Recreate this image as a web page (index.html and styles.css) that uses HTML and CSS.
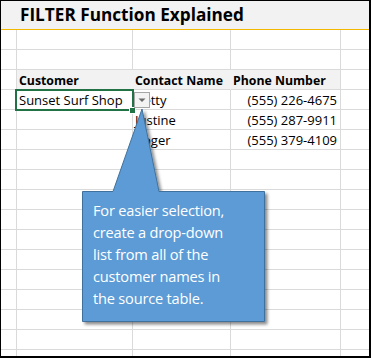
FILE: index.html
```html
<!DOCTYPE html>
<html>
<head>
<meta charset="utf-8">
<link rel="stylesheet" href="styles.css">
</head>
<body>
<div class="sheet">
  <div class="title">FILTER Function Explained</div>
  <div class="grid">
    <div class="c"></div><div class="c"></div><div class="c"></div><div class="c"></div><div class="c last"></div>
    <div class="c"></div><div class="c"></div><div class="c"></div><div class="c"></div><div class="c last"></div>
    <div class="c"></div><div class="c hd">Customer</div><div class="c hd">Contact Name</div><div class="c hd hd-end">Phone Number</div><div class="c last"></div>
    <div class="c"></div><div class="c">Sunset Surf Shop</div><div class="c">Betty</div><div class="c num">(555) 226-4675</div><div class="c last"></div>
    <div class="c"></div><div class="c"></div><div class="c">Justine</div><div class="c num">(555) 287-9911</div><div class="c last"></div>
    <div class="c"></div><div class="c"></div><div class="c">Roger</div><div class="c num">(555) 379-4109</div><div class="c last"></div>
    <div class="c"></div><div class="c"></div><div class="c"></div><div class="c"></div><div class="c last"></div>
    <div class="c"></div><div class="c"></div><div class="c"></div><div class="c"></div><div class="c last"></div>
    <div class="c"></div><div class="c"></div><div class="c"></div><div class="c"></div><div class="c last"></div>
    <div class="c"></div><div class="c"></div><div class="c"></div><div class="c"></div><div class="c last"></div>
    <div class="c"></div><div class="c"></div><div class="c"></div><div class="c"></div><div class="c last"></div>
    <div class="c"></div><div class="c"></div><div class="c"></div><div class="c"></div><div class="c last"></div>
    <div class="c"></div><div class="c"></div><div class="c"></div><div class="c"></div><div class="c last"></div>
    <div class="c"></div><div class="c"></div><div class="c"></div><div class="c"></div><div class="c last"></div>
    <div class="c"></div><div class="c"></div><div class="c"></div><div class="c"></div><div class="c last"></div>
    <div class="c"></div><div class="c"></div><div class="c"></div><div class="c"></div><div class="c last"></div>
    <div class="c"></div><div class="c"></div><div class="c"></div><div class="c"></div><div class="c last"></div>
  </div>

  <div class="selection"></div>
  <div class="handle"></div>
  <div class="dropdown">
    <svg width="14" height="14" viewBox="0 0 14 14"><path d="M3.5 5.5 L10.5 5.5 L7 9 Z" fill="#6b6b6b"/></svg>
  </div>

  <svg class="callout" width="371" height="358" viewBox="0 0 371 358">
    <defs>
      <filter id="sh" x="-20%" y="-20%" width="140%" height="140%">
        <feDropShadow dx="2.5" dy="2.5" stdDeviation="1.8" flood-color="#000" flood-opacity="0.45"/>
      </filter>
    </defs>
    <path d="M82.5 191.5 L113 191.5 L142 109 L159 191.5 L264.5 191.5 L264.5 321.5 L82.5 321.5 Z" fill="#5b9bd5" stroke="#41719c" stroke-width="1" filter="url(#sh)"/>
  </svg>
  <div class="callout-text">For easier selection,<br>create a drop-down<br>list from all of the<br>customer names in<br>the source table.</div>
</div>
</body>
</html>
```

FILE: styles.css
```css
html, body {
  margin: 0;
  padding: 0;
  background: #ffffff;
}

.sheet {
  position: relative;
  width: 371px;
  height: 358px;
  box-sizing: border-box;
  border: 1px solid #000;
  border-right-width: 2px;
  border-bottom-width: 2px;
  overflow: hidden;
  background: #ffffff;
  font-family: "Open Sans", "Noto Sans", sans-serif;
  color: #000;
}

.title {
  height: 28px;
  line-height: 28px;
  background: #f2f2f2;
  border-bottom: 1px solid #f2b800;
  padding-left: 19px;
  font-size: 17.2px;
  font-weight: 700;
  white-space: nowrap;
}

.grid {
  display: grid;
  grid-template-columns: 16px 116px 98px 110px 1fr;
  grid-auto-rows: 20px;
}

.c {
  box-sizing: border-box;
  border-right: 1px solid #dadada;
  border-bottom: 1px solid #dadada;
  padding: 1px 2px 0 2px;
  font-size: 13px;
  line-height: 19px;
  white-space: nowrap;
}

.c.last {
  border-right: none;
}

.c.hd {
  background: #f2f2f2;
  border-right-color: #f2f2f2;
  font-weight: 700;
  font-size: 12.3px;
}

.c.hd.hd-end {
  border-right-color: #dadada;
}

.c.num {
  text-align: right;
  padding-right: 3px;
}

.selection {
  position: absolute;
  left: 14px;
  top: 88px;
  width: 119px;
  height: 22px;
  box-sizing: border-box;
  border: 2px solid #217346;
}

.handle {
  position: absolute;
  left: 129px;
  top: 107px;
  width: 5px;
  height: 5px;
  background: #217346;
  box-shadow: 0 0 0 1px #ffffff;
}

.dropdown {
  position: absolute;
  left: 133px;
  top: 91px;
  width: 16px;
  height: 16px;
  box-sizing: border-box;
  border: 1px solid #a6a6a6;
  background: #f3f3f3;
  display: flex;
  align-items: center;
  justify-content: center;
}

.dropdown svg {
  display: block;
}

.callout {
  position: absolute;
  left: -1px;
  top: -1px;
}

.callout-text {
  position: absolute;
  left: 92px;
  top: 198px;
  font-size: 14.6px;
  letter-spacing: -0.2px;
  line-height: 22px;
  color: #ffffff;
  white-space: nowrap;
}
```
